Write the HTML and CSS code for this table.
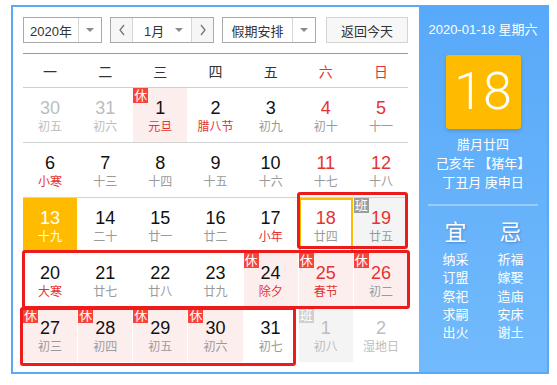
FILE: index.html
```html
<!DOCTYPE html>
<html lang="zh">
<head>
<meta charset="utf-8">
<link rel="stylesheet" href="styles.css">
</head>
<body>
<div class="app">
  <div class="main">
    <div class="toolbar">
      <div class="sel year"><span class="val">2020年</span><span class="arr"><i class="tri"></i></span></div>
      <div class="sel month">
        <span class="nav"><svg width="8" height="12" viewBox="0 0 8 12"><polyline points="6,1 2,6 6,11" fill="none" stroke="#777" stroke-width="1.3"/></svg></span>
        <span class="mval"><span>1月</span><i class="tri"></i></span>
        <span class="nav"><svg width="8" height="12" viewBox="0 0 8 12"><polyline points="2,1 6,6 2,11" fill="none" stroke="#777" stroke-width="1.3"/></svg></span>
      </div>
      <div class="sel hol"><span class="val">假期安排</span><span class="arr"><i class="tri"></i></span></div>
      <div class="btn">返回今天</div>
    </div>
    <div class="week">
      <span>一</span><span>二</span><span>三</span><span>四</span><span>五</span><span class="we">六</span><span class="we">日</span>
    </div>
    <div class="rows">
      <div class="row">
        <div class="cell other"><b>30</b><small>初五</small></div>
        <div class="cell other"><b>31</b><small>初六</small></div>
        <div class="cell rest"><i class="badge">休</i><b>1</b><small class="fest">元旦</small></div>
        <div class="cell"><b>2</b><small class="fest">腊八节</small></div>
        <div class="cell"><b>3</b><small>初九</small></div>
        <div class="cell wk"><b>4</b><small>初十</small></div>
        <div class="cell wk"><b>5</b><small>十一</small></div>
      </div>
      <div class="row">
        <div class="cell"><b>6</b><small class="fest">小寒</small></div>
        <div class="cell"><b>7</b><small>十三</small></div>
        <div class="cell"><b>8</b><small>十四</small></div>
        <div class="cell"><b>9</b><small>十五</small></div>
        <div class="cell"><b>10</b><small>十六</small></div>
        <div class="cell wk"><b>11</b><small>十七</small></div>
        <div class="cell wk"><b>12</b><small>十八</small></div>
      </div>
      <div class="row">
        <div class="cell today"><b>13</b><small>十九</small></div>
        <div class="cell"><b>14</b><small>二十</small></div>
        <div class="cell"><b>15</b><small>廿一</small></div>
        <div class="cell"><b>16</b><small>廿二</small></div>
        <div class="cell"><b>17</b><small class="fest">小年</small></div>
        <div class="cell wk selected"><b>18</b><small>廿四</small></div>
        <div class="cell wk work"><i class="badge ban">班</i><b>19</b><small>廿五</small></div>
      </div>
      <div class="row">
        <div class="cell"><b>20</b><small class="fest">大寒</small></div>
        <div class="cell"><b>21</b><small>廿七</small></div>
        <div class="cell"><b>22</b><small>廿八</small></div>
        <div class="cell"><b>23</b><small>廿九</small></div>
        <div class="cell rest"><i class="badge">休</i><b>24</b><small class="fest">除夕</small></div>
        <div class="cell wk rest"><i class="badge">休</i><b>25</b><small class="fest">春节</small></div>
        <div class="cell wk rest"><i class="badge">休</i><b>26</b><small>初二</small></div>
      </div>
      <div class="row">
        <div class="cell rest"><i class="badge">休</i><b>27</b><small>初三</small></div>
        <div class="cell rest"><i class="badge">休</i><b>28</b><small>初四</small></div>
        <div class="cell rest"><i class="badge">休</i><b>29</b><small>初五</small></div>
        <div class="cell rest"><i class="badge">休</i><b>30</b><small>初六</small></div>
        <div class="cell"><b>31</b><small>初七</small></div>
        <div class="cell other work"><i class="badge ban light">班</i><b>1</b><small>初八</small></div>
        <div class="cell other"><b>2</b><small>湿地日</small></div>
      </div>
    </div>
  </div>
  <div class="side">
    <div class="date">2020-01-18 星期六</div>
    <div class="bigday">18</div>
    <div class="lunar">
      <div>腊月廿四</div>
      <div>己亥年 【猪年】</div>
      <div>丁丑月 庚申日</div>
    </div>
    <div class="divider"></div>
    <div class="yiji">
      <div class="col">
        <div class="head">宜</div>
        <div>纳采</div><div>订盟</div><div>祭祀</div><div>求嗣</div><div>出火</div>
      </div>
      <div class="col">
        <div class="head">忌</div>
        <div>祈福</div><div>嫁娶</div><div>造庙</div><div>安床</div><div>谢土</div>
      </div>
    </div>
  </div>
  <div class="mark m1"></div>
  <div class="mark m2"></div>
  <div class="mark m3"></div>
</div>
</body>
</html>
```

FILE: styles.css
```css
* { box-sizing: border-box; }
html, body { margin: 0; padding: 0; background: #fff; }
body {
  font-family: "Liberation Sans", "Noto Sans CJK SC", sans-serif;
  color: #333;
}
.app {
  position: relative;
  margin: 5px 0 0 11px;
  width: 538px;
  height: 369px;
  border: 2px solid #5aa9f8;
  display: flex;
}
.main {
  width: 406px;
  padding: 10px 11px 0 10px;
  background: #fff;
}
.toolbar {
  display: flex;
  height: 26px;
  font-size: 13px;
  margin-bottom: 10px;
}
.sel {
  display: flex;
  border: 1px solid #a9a9a9;
  background: #fff;
  height: 26px;
  margin-right: 8px;
}
.sel .val {
  display: flex;
  align-items: center;
  justify-content: center;
  border-right: 1px solid #d6d6d6;
}
.sel .arr {
  display: flex;
  align-items: center;
  justify-content: center;
  flex: 1;
}
.tri {
  display: block;
  width: 0;
  height: 0;
  border-left: 4px solid transparent;
  border-right: 4px solid transparent;
  border-top: 4px solid #8a8a8a;
}
.year { width: 79px; }
.year .val { width: 55px; }
.month { width: 104px; }
.month .nav {
  width: 21px;
  display: flex;
  align-items: center;
  justify-content: center;
  background: #f6f6f6;
}
.month .mval {
  width: 60px;
  display: flex;
  align-items: center;
  border-left: 1px solid #d6d6d6;
  border-right: 1px solid #d6d6d6;
  padding: 0 8px 0 11px;
  justify-content: space-between;
}
.hol { width: 94px; margin-right: 10px; }
.hol .val { width: 70px; }
.btn {
  width: 82px;
  height: 26px;
  border: 1px solid #d3d3d3;
  background: #f7f7f7;
  display: flex;
  align-items: center;
  justify-content: center;
}
.week {
  display: grid;
  grid-template-columns: repeat(7, 1fr);
  column-gap: 1px;
  border-top: 1px solid #5aa9f8;
  border-bottom: 1px solid #cfcfcf;
  height: 35px;
  align-items: center;
  text-align: center;
  font-size: 14px;
  color: #333;
}
.week .we { color: #e53333; }
.rows { display: flex; flex-direction: column; }
.row {
  display: grid;
  grid-template-columns: repeat(7, 1fr);
  column-gap: 1px;
  height: 55px;
  border-bottom: 1px solid #d2d2d2;
}
.row:last-child { border-bottom: none; height: 54px; }
.cell {
  position: relative;
  display: flex;
  flex-direction: column;
  align-items: center;
  padding-top: 10px;
  height: 54px;
}
.cell b {
  font-weight: normal;
  font-size: 18px;
  line-height: 20px;
  color: #111;
}
.cell small {
  font-size: 12px;
  line-height: 18px;
  color: #9a9a9a;
}
.cell small.fest { color: #e53333; }
.cell.wk b { color: #e53333; }
.cell.other b, .cell.other small { color: #bdbdbd; }
.cell.rest { background: #fdeeee; }
.cell.work { background: #f4f4f4; }
.cell.today { background: #ffbb00; }
.cell.today b, .cell.today small { color: #fff; }
.cell.selected { box-shadow: inset 0 0 0 2px #ffbb00; }
.badge {
  position: absolute;
  left: 0;
  top: 0;
  width: 15px;
  height: 15px;
  font-style: normal;
  font-size: 13px;
  line-height: 15px;
  text-align: center;
  color: #fff;
  background: #f8433a;
}
.badge.ban { background: #9c9c9c; }
.badge.ban.light { background: #cfcfcf; }

.side {
  width: 128px;
  background: linear-gradient(#58a9f9, #72bafc);
  color: #fff;
  display: flex;
  flex-direction: column;
  align-items: center;
  padding-top: 14px;
}
.date { font-size: 13px; line-height: 18px; }
.bigday {
  margin-top: 16px;
  width: 75px;
  height: 74px;
  background: #ffbb00;
  border-radius: 3px;
  box-shadow: 0 2px 4px rgba(0,0,0,0.15);
  font-family: Roboto, "Liberation Sans", sans-serif;
  font-weight: 300;
  font-size: 52px;
  line-height: 74px;
  text-align: center;
  color: #fff;
}
.lunar {
  margin-top: 6px;
  font-size: 13px;
  line-height: 19px;
  text-align: center;
}
.divider {
  margin-top: 12px;
  width: 110px;
  height: 2px;
  background: rgba(255,255,255,0.35);
}
.yiji {
  display: flex;
  gap: 15px;
  margin-top: 14px;
}
.yiji .col {
  width: 40px;
  text-align: center;
  font-size: 13px;
  line-height: 18.3px;
}
.yiji .head {
  font-size: 22px;
  line-height: 26px;
  margin-bottom: 5px;
  text-shadow: 1px 1px 2px rgba(0,0,80,0.25);
}
.mark {
  position: absolute;
  border: 3px solid #ee1b1b;
  border-radius: 3px;
}
.m1 { left: 284px; top: 185px; width: 111px; height: 57px; }
.m2 { left: 9px; top: 243px; width: 388px; height: 59px; }
.m3 { left: 7px; top: 300px; width: 276px; height: 59px; }
```
